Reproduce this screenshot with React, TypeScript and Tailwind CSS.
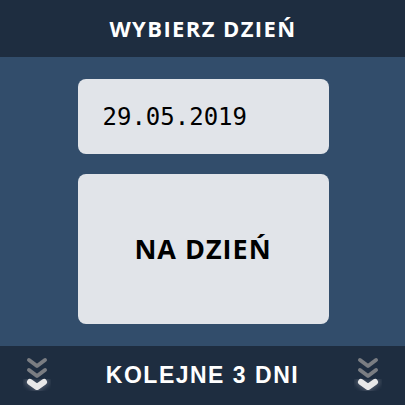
import * as React from "react";

const Chevrons: React.FC = () => (
  <svg width="28" height="40" viewBox="0 0 28 40" className="shrink-0">
    <defs>
      <filter id="glow" x="-50%" y="-50%" width="200%" height="200%">
        <feGaussianBlur stdDeviation="2" />
      </filter>
    </defs>
    <polyline points="6,4 14,10 22,4" fill="none" stroke="#7a7d82" strokeWidth="4" strokeLinecap="round" strokeLinejoin="round" />
    <polyline points="6,14 14,20 22,14" fill="none" stroke="#7a7d82" strokeWidth="4" strokeLinecap="round" strokeLinejoin="round" />
    <polyline points="6,26 14,32 22,26" fill="none" stroke="#4a5566" strokeWidth="9" strokeLinecap="round" strokeLinejoin="round" filter="url(#glow)" />
    <polyline points="7,26 14,31 21,26" fill="none" stroke="#e8e8e8" strokeWidth="6" strokeLinecap="round" strokeLinejoin="round" />
  </svg>
);

const App: React.FC = () => {
  return (
    <div className="w-[405px] h-[405px] flex flex-col bg-[#324d6b]">
      {/* Header */}
      <div className="h-[57px] bg-[#1e2d40] flex items-center justify-center pl-px">
        <h1
          className="text-white font-bold text-[22px] tracking-[1.4px]"
          style={{ fontFamily: '"Open Sans", sans-serif' }}
        >
          WYBIERZ DZIEŃ
        </h1>
      </div>

      <div className="flex-1 flex flex-col items-center pt-[22px] gap-5 pl-px">
        <div
          className="w-[251px] h-[75px] rounded-lg bg-[#e1e4e9] flex items-center pl-[25px] text-[24px] text-black"
          style={{ fontFamily: '"DejaVu Sans Mono", monospace' }}
        >
          29.05.2019
        </div>
        <button
          className="w-[251px] h-[150px] rounded-lg bg-[#e1e4e9] flex items-center justify-center text-[27px] tracking-[1px] font-bold text-black"
          style={{ fontFamily: '"Open Sans", sans-serif' }}
        >
          NA DZIEŃ
        </button>
      </div>

      {/* Footer */}
      <div className="h-[59px] bg-[#1e2d40] flex items-center justify-between px-[23px]">
        <Chevrons />
        <span
          className="text-white font-bold text-[23px] tracking-[1.5px]"
          style={{ fontFamily: '"Liberation Sans", Arial, sans-serif' }}
        >
          KOLEJNE 3 DNI
        </span>
        <Chevrons />
      </div>
    </div>
  );
};

export default App;
